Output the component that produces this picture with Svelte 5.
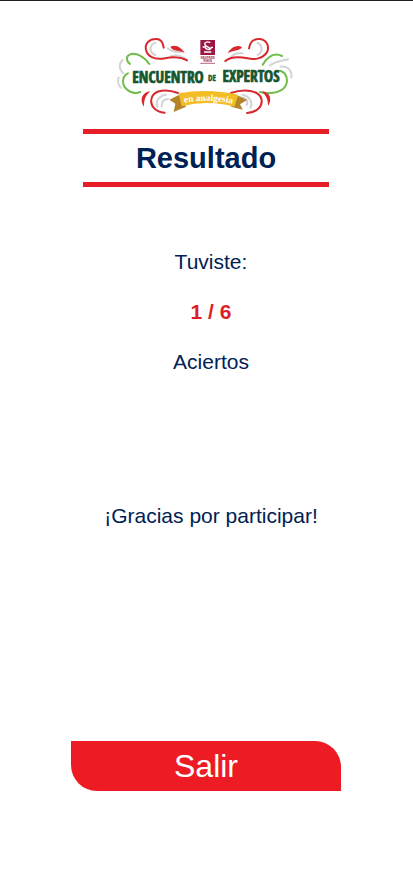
<script>
  const correct = 1;
  const total = 6;
</script>

<main>
  <svg class="logo" viewBox="0 0 540 240" role="img" aria-label="Encuentro de Expertos en analgesia">
    <g class="line gray">
      <path d="M118 20C100 25 98 50 118 57" />
      <path d="M156 37C165 46 175 49 195 48" />
      <path d="M165 60C185 56 200 62 211 70" />
      <path d="M20 72C8 82 8 98 22 112" />
      <path d="M8 125C4 135 8 148 14 155" />
      <path d="M150 176C130 178 118 195 124 212" />
      <path d="M156 189C142 190 135 200 137 212" />
      <path d="M425 21C442 28 440 50 425 57" />
      <path d="M343 66C350 55 365 50 380 52" />
      <path d="M462 88C480 74 500 74 516 70" />
      <path d="M494 92C518 90 528 105 526 125" />
      <path d="M380 176C400 180 412 200 403 215" />
      <path d="M372 184C390 184 398 195 392 207" />
    </g>
    <g class="line green">
      <path d="M100 84C85 62 60 48 42 55C30 60 30 75 42 84" />
      <path d="M36 112C18 120 16 145 32 160C45 172 60 173 73 168" />
      <path d="M440 86C455 62 475 48 498 60" />
      <path d="M492 104C515 110 518 140 505 155C490 172 455 175 432 168" />
    </g>
    <g class="line red">
      <path d="M143 35C141 15 130 8 118 9C98 10 86 24 90 42C95 62 115 71 140 68C165 64 190 60 213 73" />
      <path d="M399 37C402 15 415 8 432 9C455 12 461 35 452 50C440 68 415 72 395 67C375 63 345 60 328 75" />
      <path d="M186 171C150 158 117 162 108 183C99 207 117 228 146 230" />
      <path d="M345 171C385 157 428 163 436 188C442 213 420 230 393 231" />
    </g>
    <g class="leaf">
      <path d="M163 32C180 24 197 36 206 51C195 42 168 47 163 32Z" />
      <path d="M378 33C360 24 342 38 335 52C350 42 372 46 378 33Z" />
      <path d="M103 166C82 168 68 188 84 212C84 190 88 180 103 166Z" />
      <path d="M438 166C462 168 470 190 456 210C456 190 450 180 438 166Z" />
    </g>
    <path fill="#9d1744" d="M253 12h44v45h-44z" />
    <path class="emblem" d="M283 20C272 14 261 22 269 29C276 34 285 35 280 42M260 33H268C268 42 285 42 286 34H291M264 48H286" />
    <path stroke="#9d1744" stroke-width="2" d="M253 82H297" />
    <text class="sponsor" x="275" y="68">SIEGFRIED</text>
    <text class="sponsor" x="275" y="78">RHEIN</text>
    <text class="name" x="156" y="141">ENCUENTRO</text>
    <text class="name small" x="288" y="136">DE</text>
    <text class="name" x="405" y="137">EXPERTOS</text>
    <path fill="#b38428" d="M190 176L160 191L178 203L173 228L210 212ZM363 178L393 192L372 205L380 221L345 212Z" />
    <path fill="#f4bd25" d="M188 172Q275 156 367 176L355 212Q275 190 197 211Z" />
    <path id="ribbon" fill="none" d="M190 203Q275 185 365 206" />
    <text class="tag"><textPath href="#ribbon" startOffset="50%">en analgesia</textPath></text>
  </svg>

  <h1>Resultado</h1>

  <section class="message">
    <p>Tuviste:</p>
    <p class="score">{correct} / {total}</p>
    <p>Aciertos</p>
    <p class="thanks">¡Gracias por participar!</p>
  </section>

  <button type="button">Salir</button>
</main>

<style>
  :global(body) {
    margin: 0;
    background: #fff;
  }
  main {
    display: flex;
    flex-direction: column;
    align-items: center;
    box-sizing: border-box;
    min-height: 100vh;
    padding: 35px 21px 40px 20px;
    border-top: 1px solid #231f20;
    color: #002154;
    font-family: "Liberation Sans", Arial, sans-serif;
  }
  .logo {
    display: block;
    width: 180px;
    height: 80px;
  }
  .line {
    fill: none;
    stroke-width: 6px;
    stroke-linecap: round;
  }
  .red { stroke: #d9272e; }
  .green { stroke: #71bd49; }
  .gray { stroke: #d2d3d5; }
  .leaf { fill: #d9272e; }
  .emblem {
    fill: none;
    stroke: #fff;
    stroke-width: 4px;
  }
  .name {
    fill: #17552f;
    stroke: #17552f;
    stroke-width: 2px;
    font: 400 46px "Noto Sans ExtraCondensed", "Open Sans Condensed", "Roboto Condensed", "Liberation Sans Narrow", sans-serif;
    text-anchor: middle;
  }
  .small {
    stroke-width: 1px;
    font-size: 24px;
    font-weight: bold;
  }
  .sponsor {
    fill: #9d1744;
    font: bold 8px "Liberation Sans", sans-serif;
    text-anchor: middle;
  }
  .tag {
    fill: #fff;
    font: bold 28px "Liberation Serif", serif;
    text-anchor: middle;
  }
  h1 {
    box-sizing: border-box;
    width: 60%;
    min-width: 246px;
    margin: 13px 0 50px;
    border: solid #e71e27;
    border-width: 5px 0;
    font-size: 29px;
    line-height: 48px;
    text-align: center;
  }
  .message {
    padding-left: 10px;
    font-size: 21px;
    line-height: 50px;
    text-align: center;
  }
  p { margin: 0; }
  .score {
    color: #dc1f2a;
    font-weight: bold;
  }
  .thanks { margin-top: 104px; }
  button {
    width: 270px;
    height: 50px;
    margin-top: 200px;
    padding: 0;
    border: 0;
    border-radius: 0 26px 0 26px;
    background: #ed1c24;
    color: #fff;
    font: 32px "Liberation Sans", Arial, sans-serif;
    cursor: pointer;
  }
</style>
